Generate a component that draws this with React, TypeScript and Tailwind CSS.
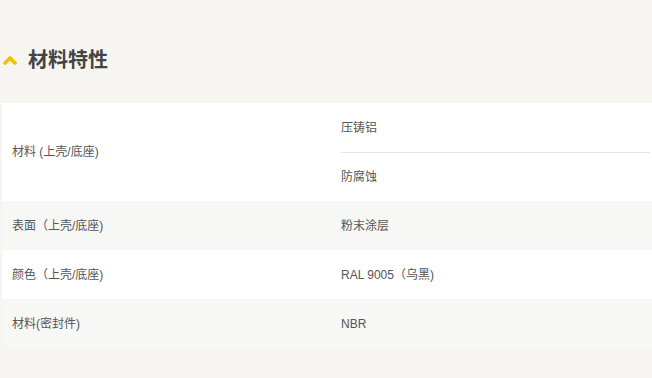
import React from 'react';

type Row = { label: string; values: string[] };

const rows: Row[] = [
  { label: '材料 (上壳/底座)', values: ['压铸铝', '防腐蚀'] },
  { label: '表面（上壳/底座)', values: ['粉末涂层'] },
  { label: '颜色（上壳/底座)', values: ['RAL 9005（乌黑)'] },
  { label: '材料(密封件)', values: ['NBR'] },
];

const App: React.FC = () => {
  return (
    <div
      className="h-[378px] w-[652px] overflow-hidden bg-[#f6f5f1] text-[#555]"
      style={{ fontFamily: '"Liberation Sans", "Noto Sans CJK SC", sans-serif' }}
    >
      <div className="flex h-[103px] items-center gap-[11px] pl-[3px] pt-[16px]">
        <svg width="14" height="10" viewBox="0 0 14 10" className="text-[#f7bf00]">
          <path d="M2 8 7 3l5 5" fill="none" stroke="currentColor" strokeWidth="3.6" strokeLinecap="round" strokeLinejoin="round" />
        </svg>
        <h2 className="text-[20px] font-bold leading-none text-[#444]">材料特性</h2>
      </div>

      <div className="ml-[2px] flex flex-col text-[12px]">
        {rows.map((row, i) => (
          <div key={row.label} className={`flex ${i % 2 === 0 ? 'bg-white' : 'bg-[#f7f7f5]'}`}>
            <div className="flex w-[324px] items-center pl-[10px]">{row.label}</div>
            <div className="flex flex-1 flex-col pl-[15px] pr-[2px]">
              {row.values.map((v, j) => (
                <div
                  key={v}
                  className={`flex h-[49px] items-center ${j > 0 ? 'border-t border-[#e5e5e5]' : ''}`}
                >
                  {v}
                </div>
              ))}
            </div>
          </div>
        ))}
      </div>
    </div>
  );
};

export default App;
